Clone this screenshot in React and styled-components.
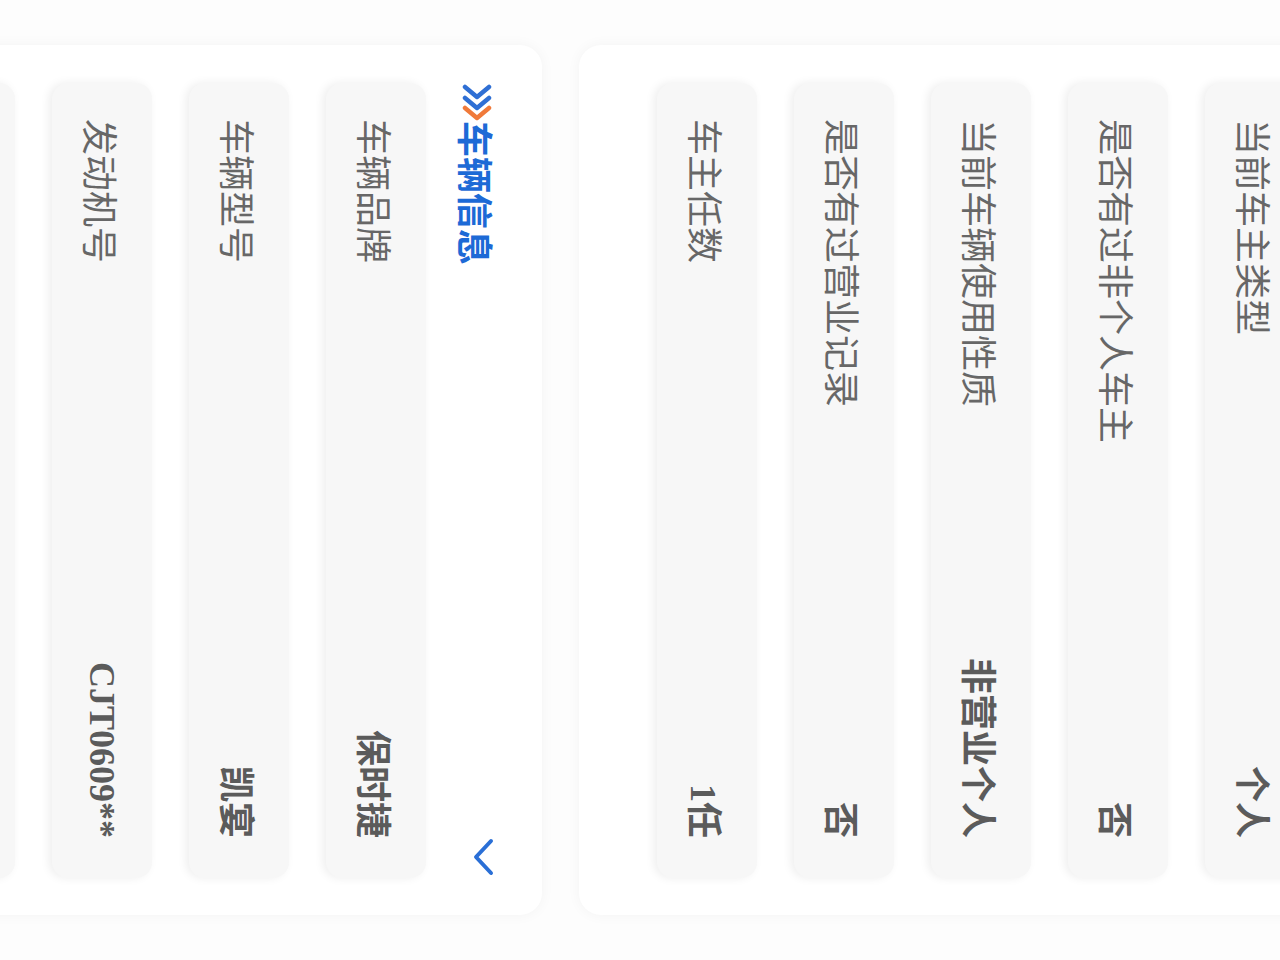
import React from "react";
import styled, { createGlobalStyle } from "styled-components";

const Global = createGlobalStyle`
  html, body { margin: 0; padding: 0; background: #fdfdfd; overflow: hidden; }
  body { font-family: "Noto Sans CJK SC", "Noto Sans", sans-serif; }
`;

const Stage = styled.div`
  width: 1280px;
  height: 960px;
  overflow: hidden;
  position: relative;
  background: #fdfdfd;
`;

/* the portrait phone page, turned a quarter clockwise */
const Portrait = styled.div`
  width: 960px;
  height: 1280px;
  transform-origin: 0 0;
  transform: translateX(1280px) rotate(90deg);
  box-sizing: border-box;
  padding: 0 45px;
  display: flex;
  flex-direction: column;
  gap: 37px;
  background: #fdfdfd;
`;

const Card = styled.section`
  background: #ffffff;
  border-radius: 22px;
  box-shadow: 0 0 14px rgba(0, 0, 0, 0.045);
  padding: 38px 37px ${(p) => p.$bottom || 78}px 38px;
  margin-top: ${(p) => p.$offset || 0}px;
  display: flex;
  flex-direction: column;
  gap: 37px;
  flex-shrink: 0;
`;

const Header = styled.div`
  height: 54px;
  margin-bottom: -13px;
  display: flex;
  align-items: center;
  justify-content: space-between;
`;

const Title = styled.div`
  display: flex;
  align-items: center;
  font-weight: 700;
  font-size: 36px;
  color: #1d6ad6;
  line-height: 1;
`;

const Toggle = styled.div`
  display: flex;
  margin: 0 1px 12px 0;
`;

const Row = styled.div`
  height: 100px;
  border-radius: 16px;
  background: #f7f7f7;
  box-shadow: 0 3px 10px rgba(0, 0, 0, 0.07);
  box-sizing: border-box;
  padding: 0 40px 0 36px;
  display: flex;
  align-items: center;
  justify-content: space-between;
  flex-shrink: 0;
`;

const Label = styled.span`
  font-size: 36px;
  color: #676767;
  font-family: "Noto Sans CJK SC", "Noto Sans", sans-serif;
  font-weight: 400;
`;

const Value = styled.span`
  font-size: 36px;
  color: #5b5b5b;
  font-weight: 700;
  font-family: "Liberation Serif", "Noto Sans CJK SC", serif;
`;

const ArrowsIcon = () => (
  <svg width="38" height="30" viewBox="0 0 38 30" style={{ display: "block" }}>
    <g fill="none" strokeWidth="4.5" strokeLinecap="round" strokeLinejoin="round">
      <path d="M4 3 L14 15 L4 27" stroke="#2f6fd4" />
      <path d="M15 3 L25 15 L15 27" stroke="#2f6fd4" />
      <path d="M25 3 L35 15 L25 27" stroke="#f07a3a" />
    </g>
  </svg>
);

const ChevronDown = () => (
  <svg width="40" height="24" viewBox="0 0 40 24" style={{ display: "block" }}>
    <path d="M4 4 L20 19 L36 4" fill="none" stroke="#2a6fd6" strokeWidth="4" strokeLinecap="round" strokeLinejoin="round" />
  </svg>
);

const owner = [
  ["当前车主类型", "个人"],
  ["是否有过非个人车主", "否"],
  ["当前车辆使用性质", "非营业个人"],
  ["是否有过营业记录", "否"],
  ["车主任数", "1任"],
];

const vehicle = [
  ["车辆品牌", "保时捷"],
  ["车辆型号", "凯宴"],
  ["发动机号", "CJT0609**"],
  ["车架号", "WP1AB2920**"],
];

export default function App() {
  return (
    <Stage>
      <Global />
      <Portrait>
        <Card $offset={-63}>
          {owner.map(([l, v]) => (
            <Row key={l}>
              <Label>{l}</Label>
              <Value>{v}</Value>
            </Row>
          ))}
        </Card>
        <Card $bottom={38}>
          <Header>
            <Title>
              <ArrowsIcon />
              <span>车辆信息</span>
            </Title>
            <Toggle>
              <ChevronDown />
            </Toggle>
          </Header>
          {vehicle.map(([l, v]) => (
            <Row key={l}>
              <Label>{l}</Label>
              <Value>{v}</Value>
            </Row>
          ))}
        </Card>
      </Portrait>
    </Stage>
  );
}
